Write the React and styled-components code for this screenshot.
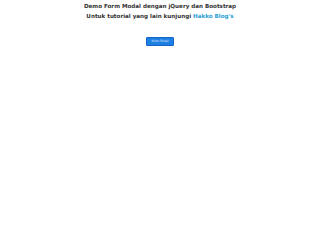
import React from "react";
import styled, { createGlobalStyle } from "styled-components";

const GlobalStyle = createGlobalStyle`
  html, body {
    margin: 0;
    padding: 0;
    background: #ffffff;
  }
`;

export default function App() {
  return (
    <>
      <GlobalStyle />
      <Page>
        <Heading>Demo Form Modal dengan jQuery dan Bootstrap</Heading>
        <Heading>
          Untuk tutorial yang lain kunjungi <BlogLink href="#">Hakko Blog's</BlogLink>
        </Heading>
        <OpenButton type="button">Kirim Email</OpenButton>
      </Page>
    </>
  );
}

const Page = styled.div`
  display: flex;
  flex-direction: column;
  align-items: center;
  padding-top: 2px;
  font-family: "DejaVu Sans", Verdana, sans-serif;
`;

const Heading = styled.div`
  font-size: 5.6px;
  line-height: 9.5px;
  font-weight: bold;
  color: #333333;
  text-align: center;
`;

const BlogLink = styled.a`
  color: #2a9fd8;
  text-decoration: none;
`;

const OpenButton = styled.button`
  margin-top: 16px;
  width: 28px;
  height: 9px;
  padding: 0;
  border: 1px solid #1565c8;
  border-radius: 1px;
  background: #1e7fe3;
  color: #e8f1ff;
  font-family: "DejaVu Sans", Verdana, sans-serif;
  font-size: 3px;
  line-height: 7px;
  cursor: pointer;
`;
